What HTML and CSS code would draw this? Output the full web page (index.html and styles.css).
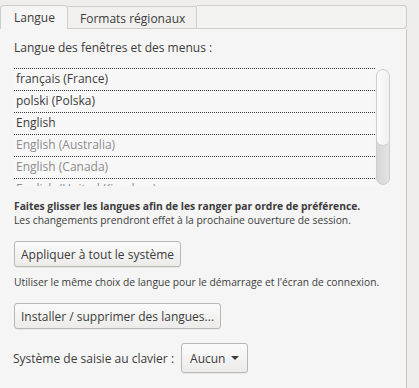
FILE: index.html
```html
<!DOCTYPE html>
<html lang="fr">

<head>
    <meta charset="UTF-8">
    <title>Prise en charge des langues</title>
    <link rel="stylesheet" href="styles.css">
</head>

<body>
    <div class="window">
        <div class="tabs">
            <div class="tab active">Langue</div>
            <div class="tab">Formats régionaux</div>
            <div class="tab-fill"></div>
        </div>

        <div class="panel">
            <div class="caption">Langue des fenêtres et des menus :</div>

            <!-- language list with its scrollbar -->
            <div class="lang-box">
                <ul class="lang-list">
                    <li>français (France)</li>
                    <li>polski (Polska)</li>
                    <li>English</li>
                    <li class="muted">English (Australia)</li>
                    <li class="muted">English (Canada)</li>
                    <li class="muted">English (United Kingdom)</li>
                </ul>
                <div class="scrollbar">
                    <div class="thumb"></div>
                </div>
            </div>

            <p class="hint"><b>Faites glisser les langues afin de les ranger par ordre de préférence.</b><br>
                Les changements prendront effet à la prochaine ouverture de session.</p>

            <button type="button" class="btn">Appliquer à tout le système</button>
            <p class="note">Utiliser le même choix de langue pour le démarrage et l'écran de connexion.</p>

            <button type="button" class="btn">Installer / supprimer des langues...</button>

            <div class="input-row">
                <span>Système de saisie au clavier :</span>
                <button type="button" class="btn combo">Aucun <span class="arrow"></span></button>
            </div>
        </div>
    </div>
</body>

</html>
```

FILE: styles.css
```css
* {
    box-sizing: border-box;
}

body {
    margin: 0;
    background: #efeeec;
    font-family: "Open Sans", "Noto Sans", sans-serif;
    font-size: 12px;
    color: #3c3c3c;
    height: 388px;
    overflow: hidden;
}

.window {
    width: 407px;
    height: 388px;
    padding-top: 5px;
    display: flex;
    flex-direction: column;
}

.tabs {
    display: flex;
    height: 24px;
}

.tab {
    padding: 0 11px 0 12px;
    line-height: 23px;
    font-size: 12px;
    border-top: 1px solid #cfcdc9;
    border-bottom: 1px solid #cfcdc9;
    border-right: 1px solid #cfcdc9;
    background: #f1f0ee;
    margin-top: 1px;
}

.tab.active {
    width: 68px;
    margin-top: 0;
    background: #f5f5f5;
    border: 1px solid #cfcdc9;
    border-bottom: none;
    border-radius: 4px 4px 0 0;
    padding-left: 13px;
    line-height: 24px;
}

.tab-fill {
    flex: 1;
    border: 1px solid #cfcdc9;
    border-left: none;
    border-radius: 0 4px 4px 0;
    background: #f3f3f2;
}

.panel {
    flex: 1;
    background: #f5f5f5;
    border-right: 1px solid #c9c6c2;
    padding: 10px 14px 0 14px;
}

.caption {
    font-size: 12px;
    line-height: 17px;
    margin-bottom: 12px;
}

.lang-box {
    display: flex;
    height: 118px;
    overflow: hidden;
    margin-right: 2px;
}

.lang-list {
    flex: 1;
    list-style: none;
    margin: 0;
    padding: 0;
    background: #f7f7f7;
}

.lang-list li {
    height: 22px;
    line-height: 20px;
    padding-left: 2px;
    font-size: 12px;
    border-top: 1px dotted #3a3a3a;
}

.lang-list li.muted {
    color: #8c8c8c;
}

.scrollbar {
    width: 14px;
    margin: 1px 0 1px 1px;
    border: 1px solid #cdcdcd;
    border-radius: 7px;
    background: linear-gradient(90deg, #d6d6d6, #e4e4e4);
    overflow: hidden;
}

.thumb {
    height: 76px;
    border-bottom: 1px solid #cfcfcf;
    border-radius: 0 0 7px 7px;
    background: linear-gradient(90deg, #fbfbfb, #f0f0f0);
}

.hint {
    margin: 13px 0 0 0;
    font-size: 10.3px;
    line-height: 14px;
}

.hint b {
    font-weight: bold;
}

.btn {
    font-family: inherit;
    font-size: 12px;
    color: #3c3c3c;
    height: 26px;
    padding: 0 6px;
    border: 1px solid #b9b7b3;
    border-radius: 3px;
    background: linear-gradient(#fbfbfb, #ecebea);
    box-shadow: 0 1px 0 rgba(0, 0, 0, 0.05);
}

.hint + .btn {
    margin-top: 14px;
}

.note {
    margin: 8px 0 14px 0;
    font-size: 10.3px;
    line-height: 14px;
}

.input-row {
    display: flex;
    align-items: center;
    gap: 7px;
    margin-top: 14px;
    margin-left: -1px;
    font-size: 12px;
}

.combo {
    height: 30px;
    padding: 0 8px;
    display: flex;
    align-items: center;
    gap: 6px;
    font-size: 12px;
}

.arrow {
    width: 0;
    height: 0;
    border-left: 4px solid transparent;
    border-right: 4px solid transparent;
    border-top: 4px solid #3c3c3c;
}
```
